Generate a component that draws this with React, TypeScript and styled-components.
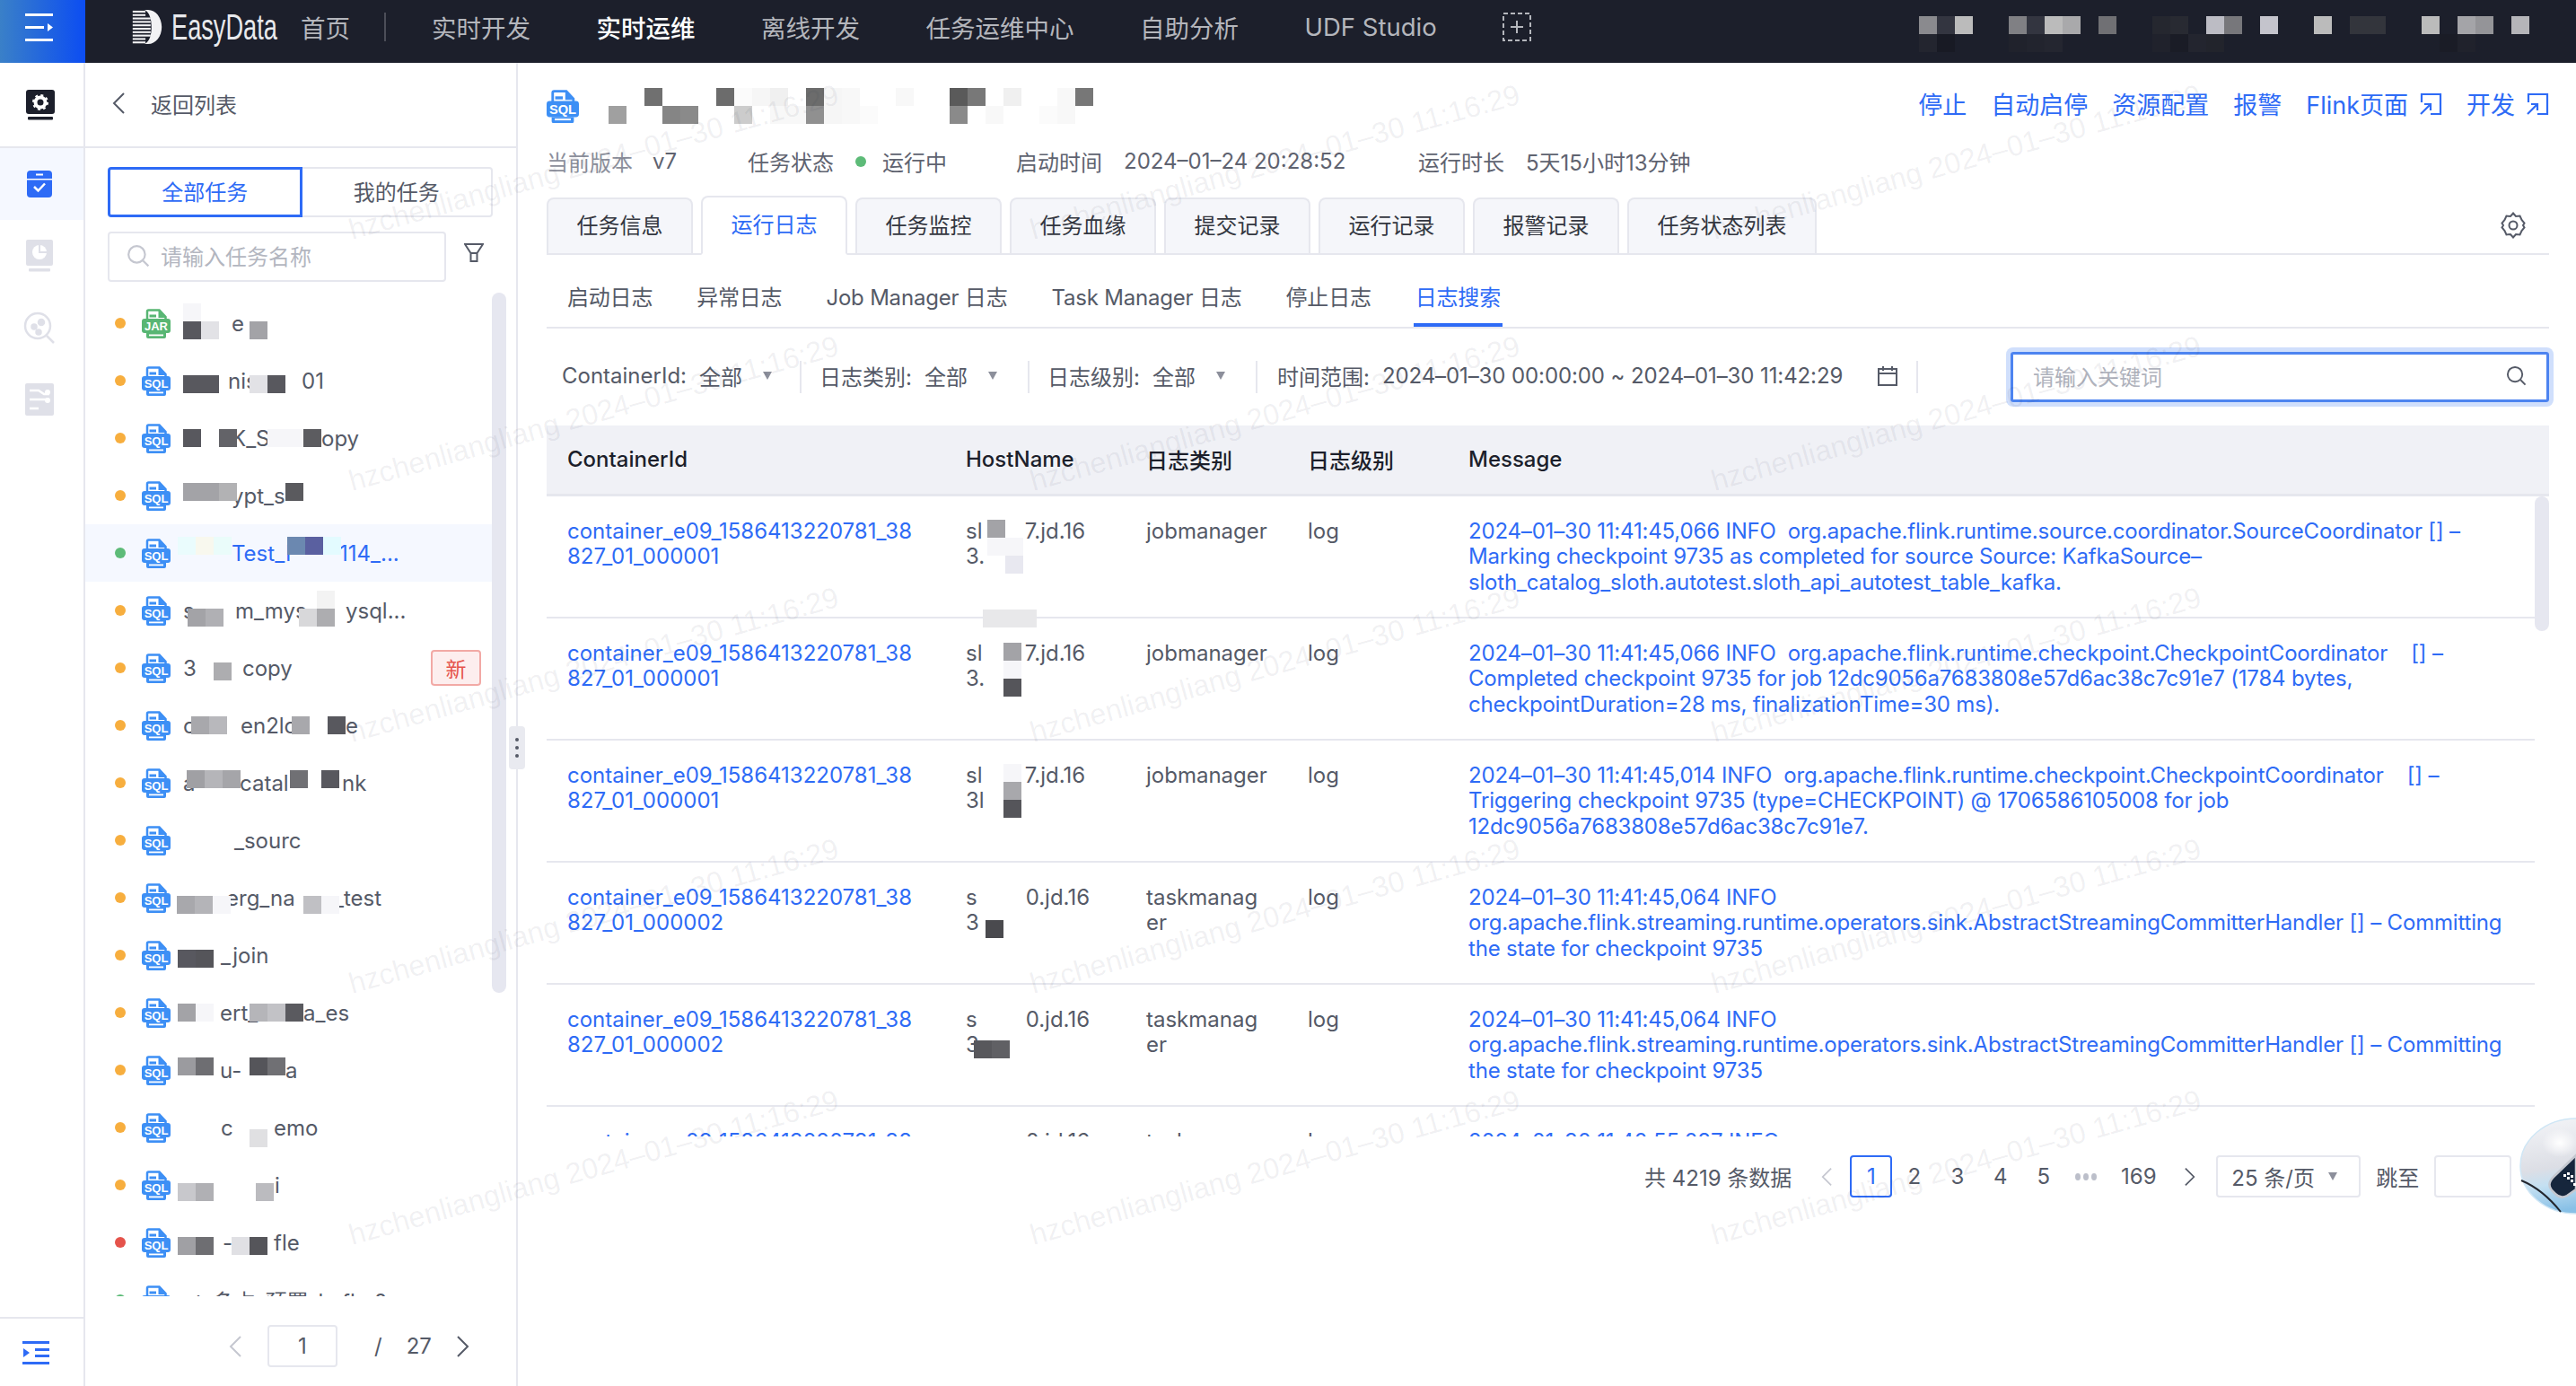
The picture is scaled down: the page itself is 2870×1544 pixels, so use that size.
import React from "react";
import styled, { createGlobalStyle } from "styled-components";

const FONT = `Inter, "Noto Sans CJK SC", "Liberation Sans", sans-serif`;
const BLUE = "#2e6bf6";
const LINE = "#e6e7ee";

const GlobalStyle = createGlobalStyle`
  html, body { margin: 0; padding: 0; background: #fff; }
  body { font-family: ${FONT}; font-size: 24px; color: #555a67; overflow: hidden; }
  * { box-sizing: border-box; }
`;

const Page = styled.div`
  position: relative;
  width: 2870px;
  height: 1544px;
  overflow: hidden;
`;

/* top bar */
const TopBar = styled.header`
  display: flex;
  align-items: center;
  height: 70px;
  padding-bottom: 10px;
  background: #1c1f2b;
`;
const MenuBlock = styled.div`
  width: 95px;
  height: 70px;
  flex: none;
  align-self: flex-start;
  display: flex;
  align-items: center;
  justify-content: center;
  padding: 0 7px 9px 0;
  background: linear-gradient(90deg, #3a80c8, #0c4df2);
`;
const LogoText = styled.span`
  display: inline-block;
  font-family: "Liberation Sans", sans-serif;
  font-size: 40px;
  color: #e8e9ec;
  margin-left: 10px;
  width: 116px;
  white-space: nowrap;
  transform: scaleX(0.68);
  transform-origin: left center;
`;
const LogoWrap = styled.div`
  display: flex;
  align-items: center;
  margin-left: 52px;
  width: 188px;
`;
const NavItem = styled.span<{ $on?: boolean }>`
  font-size: 27.5px;
  color: ${(p) => (p.$on ? "#fff" : "#b4b6bc")};
  font-weight: ${(p) => (p.$on ? 500 : 400)};
  white-space: nowrap;
`;
const NavDivider = styled.i`
  width: 2px;
  height: 32px;
  background: #4c4e58;
  margin: 0 51px 0 38px;
`;
const NavList = styled.nav`
  display: flex;
  align-items: center;
  gap: 73.5px;
`;
const TopRight = styled.div`
  margin-left: auto;
  margin-right: 52px;
  align-self: flex-start;
  padding-top: 18px;
`;

/* mosaic used for the masked bits of the screenshot */
const MosaicGrid = styled.div<{ $cols: number }>`
  display: grid;
  grid-template-columns: repeat(${(p) => p.$cols}, 20px);
  grid-auto-rows: 20px;
`;
const MosaicCell = styled.i<{ $c: string }>`
  background: ${(p) => p.$c};
`;
function Mosaic({ rows }: { rows: string[][] }) {
  return (
    <MosaicGrid $cols={rows[0].length}>
      {rows.flat().map((c, i) => (
        <MosaicCell key={i} $c={c || "transparent"} />
      ))}
    </MosaicGrid>
  );
}

/* body */
const Body = styled.div`
  display: flex;
  height: 1474px;
`;
const Rail = styled.aside`
  width: 95px;
  flex: none;
  display: flex;
  flex-direction: column;
  border-right: 2px solid ${LINE};
`;
const RailTop = styled.div`
  height: 95px;
  display: flex;
  align-items: center;
  justify-content: center;
  padding-right: 6px;
  border-bottom: 2px solid ${LINE};
  margin-right: -2px;
`;
const RailItem = styled.div<{ $on?: boolean }>`
  height: 80px;
  display: flex;
  align-items: center;
  justify-content: center;
  padding-right: 6px;
  background: ${(p) => (p.$on ? "#f5f8ff" : "transparent")};
`;
const RailFoot = styled.div`
  margin-top: auto;
  height: 77px;
  border-top: 2px solid ${LINE};
  display: flex;
  align-items: center;
  padding-left: 25px;
`;

const ListPanel = styled.aside`
  position: relative;
  width: 482px;
  flex: none;
  display: flex;
  flex-direction: column;
  border-right: 2px solid ${LINE};
`;
const BackRow = styled.div`
  height: 95px;
  flex: none;
  display: flex;
  align-items: center;
  gap: 29px;
  padding: 0 0 3px 30px;
  border-bottom: 2px solid ${LINE};
  color: #555a67;
`;
const Segment = styled.div`
  display: flex;
  margin: 21px 0 0 25px;
  width: 429px;
  height: 56px;
`;
const SegmentItem = styled.div<{ $on?: boolean }>`
  flex: 1;
  display: flex;
  align-items: center;
  justify-content: center;
  padding-bottom: 3px;
  border: ${(p) => (p.$on ? `3px solid ${BLUE}` : `2px solid ${LINE}`)};
  border-left-width: ${(p) => (p.$on ? 3 : 0)}px;
  border-radius: ${(p) => (p.$on ? "4px 0 0 4px" : "0 4px 4px 0")};
  color: ${(p) => (p.$on ? BLUE : "#555a67")};
`;
const SearchRow = styled.div`
  display: flex;
  align-items: center;
  margin: 16px 0 0 25px;
`;
const SearchBox = styled.div`
  width: 377px;
  height: 56px;
  display: flex;
  align-items: center;
  gap: 12px;
  padding: 0 0 3px 19px;
  border: 2px solid ${LINE};
  border-radius: 4px;
  color: #b3b6c0;
`;
const FilterBtn = styled.div`
  margin: -8px 0 0 20px;
  display: flex;
`;
const ListScroll = styled.div`
  flex: 1;
  display: flex;
  margin-top: 12px;
  overflow: hidden;
  min-height: 0;
`;
const Rows = styled.div`
  flex: 1;
  min-width: 0;
  height: 1118px;
  padding-top: 2px;
  overflow: hidden;
`;
const TaskRow = styled.div<{ $on?: boolean }>`
  position: relative;
  height: 64px;
  display: flex;
  align-items: center;
  padding-left: 33px;
  background: ${(p) => (p.$on ? "#f5f8ff" : "transparent")};
  color: ${(p) => (p.$on ? BLUE : "#555a67")};
`;
const Dot = styled.i<{ $c: string }>`
  width: 12px;
  height: 12px;
  flex: none;
  border-radius: 50%;
  background: ${(p) => p.$c};
`;
const TaskIcon = styled.div`
  margin-left: 18px;
  display: flex;
`;
const Frag = styled.span<{ $x: number }>`
  position: absolute;
  left: ${(p) => p.$x}px;
  top: 50%;
  white-space: pre;
  transform: translateY(-50%);
`;
const Blocks = styled.div<{ $x: number; $y: number }>`
  position: absolute;
  left: ${(p) => p.$x}px;
  top: ${(p) => p.$y}px;
`;
const NewBadge = styled.span`
  position: absolute;
  left: 385px;
  top: 12px;
  width: 56px;
  height: 40px;
  display: flex;
  align-items: center;
  justify-content: center;
  font-size: 23px;
  color: #e5534b;
  background: #fdeeee;
  border: 2px solid #f2a9a5;
  border-radius: 4px;
`;
const ScrollThumb = styled.div`
  width: 16px;
  height: 780px;
  margin: 0 11px 0 0;
  border-radius: 8px;
  background: #e6e7f0;
`;
const Pager = styled.div`
  height: 100px;
  flex: none;
  display: flex;
  align-items: flex-start;
  padding: 32px 0 0 160px;
`;
const PagerInput = styled.div`
  width: 78px;
  height: 47px;
  margin-left: 29px;
  display: flex;
  align-items: center;
  justify-content: center;
  border: 2px solid ${LINE};
  border-radius: 4px;
  color: #555a67;
`;
const PagerText = styled.span<{ $ml: number }>`
  display: flex;
  align-items: center;
  height: 47px;
  color: #555a67;
  margin-left: ${(p) => p.$ml}px;
`;
const PagerArrow = styled.span`
  display: flex;
  align-items: center;
  height: 47px;
  margin-left: 28px;
`;
const PagerArrowPrev = styled(PagerArrow)`
  margin-left: 0;
`;
const FootArrowPrev = styled(PagerArrow)`
  margin-left: 33px;
`;
const Splitter = styled.div`
  position: absolute;
  right: -10px;
  top: 739px;
  width: 18px;
  height: 48px;
  display: flex;
  flex-direction: column;
  align-items: center;
  justify-content: center;
  gap: 5px;
  background: #e9eaf0;
  border-radius: 4px;
`;
const SplitterDot = styled.i`
  width: 4px;
  height: 4px;
  border-radius: 50%;
  background: #555a67;
`;

/* main */
const Main = styled.main`
  flex: 1;
  min-width: 0;
  padding: 0 30px 0 32px;
  display: flex;
  flex-direction: column;
`;
const Head = styled.div`
  height: 90px;
  display: flex;
  align-items: flex-start;
  padding-top: 28px;
`;
const HeadIcon = styled.div`
  margin-top: 2px;
  display: flex;
`;
const TitleMask = styled.div`
  margin-left: 13px;
`;
const Actions = styled.div`
  margin-left: auto;
  margin-top: -2px;
  display: flex;
  align-items: center;
  gap: 27px;
  font-size: 27px;
  color: ${BLUE};
`;
const ActionLink = styled.span`
  display: inline-flex;
  align-items: center;
  gap: 12px;
  white-space: nowrap;
`;
const Meta = styled.div`
  display: flex;
  align-items: center;
  height: 42px;
  padding-bottom: 3px;
  white-space: nowrap;
`;
const MetaGroup = styled.div<{ $w: number }>`
  width: ${(p) => p.$w}px;
  display: flex;
  align-items: center;
  gap: 24px;
  flex: none;
`;
const MetaLabel = styled.span<{ $soft?: boolean; $ml?: number }>`
  color: ${(p) => (p.$soft ? "#8c8f9b" : "#5f6370")};
  margin-left: ${(p) => p.$ml || 0}px;
`;
const TabBar = styled.div`
  margin-top: 18px;
  height: 64px;
  display: flex;
  gap: 9px;
  align-items: flex-end;
  border-bottom: 2px solid ${LINE};
`;
const Tab = styled.div<{ $on?: boolean }>`
  padding: 0 31.5px 5px;
  display: flex;
  align-items: center;
  white-space: nowrap;
  border: 2px solid ${LINE};
  border-bottom: ${(p) => (p.$on ? "2px solid #fff" : "none")};
  margin-bottom: ${(p) => (p.$on ? "-2px" : "0")};
  height: ${(p) => (p.$on ? "66px" : "62px")};
  border-radius: 8px 8px 0 0;
  background: ${(p) => (p.$on ? "#fff" : "#f5f6fa")};
  color: ${(p) => (p.$on ? BLUE : "#33363f")};
`;
const TabGear = styled.div`
  margin-left: auto;
  align-self: center;
  margin-right: 26px;
  display: flex;
`;
const SubTabs = styled.div`
  height: 82px;
  display: flex;
  align-items: flex-start;
  gap: 49px;
  padding: 28px 0 0 23px;
  border-bottom: 2px solid ${LINE};
  white-space: nowrap;
  letter-spacing: -0.2px;
`;
const SubTab = styled.span<{ $on?: boolean }>`
  position: relative;
  height: 52px;
  color: ${(p) => (p.$on ? BLUE : "#555a67")};
  &::after {
    content: "";
    display: ${(p) => (p.$on ? "block" : "none")};
    position: absolute;
    left: -2px;
    right: -2px;
    bottom: 0;
    height: 4px;
    background: ${BLUE};
  }
`;
const Filters = styled.div`
  height: 108px;
  display: flex;
  align-items: center;
  white-space: nowrap;
`;
const FilterItem = styled.div<{ $w: number; $pl: number }>`
  width: ${(p) => p.$w}px;
  padding: 0 0 3px ${(p) => p.$pl}px;
  flex: none;
  display: flex;
  align-items: center;
  height: 36px;
  border-right: 2px solid ${LINE};
`;
const FilterValue = styled.span`
  margin-left: 14px;
`;
const Caret = styled.i`
  width: 0;
  height: 0;
  margin-left: 23px;
  border: 5.5px solid transparent;
  border-top: 9px solid #8c8f9b;
  border-bottom: 0;
`;
const TimeRange = styled.div`
  width: 736px;
  flex: none;
  padding: 0 0 3px 22px;
  display: flex;
  align-items: center;
  height: 36px;
  border-right: 2px solid ${LINE};
`;
const TimeValue = styled.span`
  margin-left: 14px;
  width: 552px;
  letter-spacing: -0.1px;
`;
const KeywordBox = styled.div`
  margin-left: auto;
  width: 600px;
  height: 56px;
  display: flex;
  align-items: center;
  justify-content: space-between;
  padding: 0 22px 3px 22px;
  border: 3px solid #4d84f0;
  border-radius: 3px;
  box-shadow: 0 0 0 5px #d0dffc;
  color: #b0b3bd;
`;
const COLS = "444px 201px 180px 179px 1fr";
const TableHead = styled.div`
  display: grid;
  grid-template-columns: ${COLS};
  height: 79px;
  align-items: center;
  padding: 0 0 1px 23px;
  background: #f0f1f6;
  border-bottom: 3px solid ${LINE};
  color: #1c1f2b;
  font-weight: 500;
`;
const TableBody = styled.div`
  position: relative;
  height: 713px;
  padding-right: 16px;
  overflow: hidden;
`;
const TableRow = styled.div`
  display: grid;
  grid-template-columns: ${COLS};
  height: 136px;
  padding: 24.5px 0 0 23px;
  border-bottom: 2px solid ${LINE};
  line-height: 28.6px;
`;
const Cell = styled.div`
  position: relative;
  white-space: pre;
`;
const LinkCell = styled(Cell)`
  color: ${BLUE};
`;
const MessageCell = styled(LinkCell)`
  letter-spacing: -0.18px;
`;
const TableThumb = styled.div`
  position: absolute;
  top: 0;
  right: 0;
  width: 16px;
  height: 150px;
  border-radius: 8px;
  background: #e6e7f0;
`;
const Foot = styled.div`
  display: flex;
  align-items: center;
  height: 47px;
  margin-top: 21px;
  padding-left: 1223px;
  white-space: nowrap;
`;
const PageBox = styled.span<{ $on?: boolean; $ml?: number }>`
  width: 47px;
  height: 47px;
  margin-left: ${(p) => p.$ml || 0}px;
  display: flex;
  align-items: center;
  justify-content: center;
  flex: none;
  border-radius: 4px;
  border: ${(p) => (p.$on ? `2px solid ${BLUE}` : "none")};
  color: ${(p) => (p.$on ? BLUE : "#555a67")};
`;
const Select = styled.div`
  width: 161px;
  height: 47px;
  margin-left: 23px;
  display: flex;
  align-items: center;
  padding-left: 15px;
  border: 2px solid ${LINE};
  border-radius: 4px;
`;
const SelectCaret = styled(Caret)`
  margin-left: 15px;
`;
const JumpInput = styled.div`
  width: 86px;
  height: 47px;
  margin-left: 17px;
  border: 2px solid ${LINE};
  border-radius: 4px;
`;
const Ellipsis = styled.span`
  width: 48px;
  display: flex;
  justify-content: center;
  gap: 3px;
  flex: none;
`;
const EllipsisDot = styled.i`
  width: 6px;
  height: 8px;
  border-radius: 50%;
  background: #bcbfca;
`;
const FootLabel = styled.span`
  margin-left: 17px;
`;
const Mascot = styled.svg`
  position: absolute;
  left: 2806px;
  top: 1245px;
`;

/* watermark sits over everything */
const Watermarks = styled.div`
  position: absolute;
  left: 393px;
  top: 0;
  display: grid;
  grid-template-columns: repeat(3, 759px);
  grid-auto-rows: 280px;
  pointer-events: none;
`;
const Mark = styled.span`
  font-size: 32.5px;
  font-family: "Liberation Sans", sans-serif;
  white-space: nowrap;
  color: rgba(40, 44, 70, 0.07);
  height: 32px;
  margin-top: 238px;
  transform: rotate(-15.6deg);
  transform-origin: left bottom;
`;

/* icons */
const DocIcon = ({ kind = "SQL", w = 32 }: { kind?: string; w?: number }) => {
  const c = kind === "JAR" ? "#58b673" : "#3d8ff5";
  return (
    <svg width={w} height={(w * 33) / 32} viewBox="0 0 32 33">
      <path d="M6 13V3a1.500 1.500 0 0 1 1.500-1.500H19.500L26.500 9v4" fill="#fff" stroke={c} strokeWidth="2.500" />
      <path d="M18.500 1.500V10h8z" fill={c} />
      <rect x="8.500" y="6.500" width="7.500" height="3" fill={c} />
      <rect x="0" y="11" width="32" height="16" rx="3" fill={c} />
      <path d="M5 27v4a2 2 0 0 0 2 2h18a2 2 0 0 0 2-2v-4z" fill={c} />
      <rect x="8" y="28.500" width="16" height="1.800" fill="#fff" />
      <text
        x="16"
        y="24"
        textAnchor="middle"
        fontSize="13"
        fontWeight="700"
        fill="#fff"
        fontFamily="Liberation Sans, sans-serif"
      >
        {kind}
      </text>
    </svg>
  );
};

const Chevron = ({ dir, c = "#555a67", w = 14, h = 24 }: { dir: "l" | "r"; c?: string; w?: number; h?: number }) => (
  <svg width={w} height={h} viewBox="0 0 14 24" fill="none" stroke={c} strokeWidth="2">
    <path d={dir === "l" ? "M13 1 2 12l11 11" : "M1 1l11 11L1 23"} />
  </svg>
);

const Jump = () => (
  <svg width="26" height="26" viewBox="0 0 26 26" fill="none" stroke={BLUE} strokeWidth="2.200">
    <path d="M3 11V2h21v22H13M2 24l10-10M6 13h7v7" />
  </svg>
);

const Magnifier = ({ c, s }: { c: string; s: number }) => (
  <svg width={s} height={s} viewBox="0 0 24 24" fill="none" stroke={c} strokeWidth="2">
    <circle cx="10.500" cy="10.500" r="8.500" />
    <path d="m17 17 5.500 5.500" />
  </svg>
);

type Piece = { x: number; y: number; rows: string[][] };
type Task = {
  dot: string;
  icon?: string;
  on?: boolean;
  isNew?: boolean;
  texts: [number, string][];
  pieces: Piece[];
};

const ORANGE = "#f7ae3e";
const GREEN = "#5dbb78";
const RED = "#e5534b";
const D = "#58585e";
const M = "#a3a3a7";
const L = "#e2e2e6";
const F = "#f6f6f9";

// x is measured from the panel's left edge, y from the row's top
const tasks: Task[] = [
  {
    dot: ORANGE,
    icon: "JAR",
    texts: [[163, "e"]],
    pieces: [
      { x: 109, y: 10, rows: [[F, ""]] },
      { x: 109, y: 30, rows: [[D, L]] },
      { x: 183, y: 30, rows: [[M]] },
    ],
  },
  {
    dot: ORANGE,
    texts: [[159, "nis"], [241, "01"]],
    pieces: [
      { x: 109, y: 26, rows: [[D, D]] },
      { x: 183, y: 26, rows: [[L, D]] },
    ],
  },
  {
    dot: ORANGE,
    texts: [[163, "K_S"], [263, "opy"]],
    pieces: [
      { x: 109, y: 22, rows: [[D, "", "#636368"]] },
      { x: 203, y: 22, rows: [[F, F, "#5c5c60"]] },
    ],
  },
  {
    dot: ORANGE,
    texts: [[163, "ypt_s"]],
    pieces: [
      { x: 109, y: 18, rows: [[M, M, "#b2b2b4"]] },
      { x: 223, y: 18, rows: [["#5a5a5e"]] },
    ],
  },
  {
    dot: GREEN,
    on: true,
    texts: [[163, "Test_F"], [283, "114_..."]],
    pieces: [
      { x: 103, y: 14, rows: [["#eafcfd", "#f8f8ee", "#eafcfa"]] },
      { x: 225, y: 14, rows: [["#6b88b0", "#5a60a0", "#e3fbff"]] },
    ],
  },
  {
    dot: ORANGE,
    texts: [[109, "s"], [167, "m_mys"], [290, "ysql..."]],
    pieces: [
      { x: 114, y: 30, rows: [["#a3a3a7", "#b0b0b4"]] },
      { x: 238, y: 30, rows: [["#d8d8da", "#adadb0"]] },
      { x: 258, y: 10, rows: [["#f3f3f3"]] },
    ],
  },
  {
    dot: ORANGE,
    isNew: true,
    texts: [[109, "3"], [175, "copy"]],
    pieces: [{ x: 143, y: 26, rows: [["#adadb0"]] }],
  },
  {
    dot: ORANGE,
    texts: [[109, "c"], [173, "en2lo"], [290, "e"]],
    pieces: [
      { x: 118, y: 22, rows: [["#a8a8ac", "#b8b8bc"]] },
      { x: 230, y: 22, rows: [["#a8a8ac"]] },
      { x: 270, y: 22, rows: [[D]] },
    ],
  },
  {
    dot: ORANGE,
    texts: [[109, "a"], [172, "catal"], [286, "nk"]],
    pieces: [
      { x: 113, y: 18, rows: [["#a0a0a4", "#b5b5b9", "#a5a5a9"]] },
      { x: 228, y: 18, rows: [["#707074"]] },
      { x: 263, y: 18, rows: [[D]] },
    ],
  },
  {
    dot: ORANGE,
    texts: [[166, "_sourc"]],
    pieces: [],
  },
  {
    dot: ORANGE,
    texts: [[157, "erg_na"], [277, "_test"]],
    pieces: [
      { x: 102, y: 30, rows: [["#a8a8ac", "#b4b4b8", F]] },
      { x: 243, y: 30, rows: [["#c0c0c4", F]] },
    ],
  },
  {
    dot: ORANGE,
    texts: [[151, "_join"]],
    pieces: [{ x: 103, y: 26, rows: [["#58585f", "#55555a"]] }],
  },
  {
    dot: ORANGE,
    texts: [[150, "ert_"], [243, "a_es"]],
    pieces: [
      { x: 103, y: 22, rows: [["#a3a3a7", F]] },
      { x: 183, y: 22, rows: [["#b5b5b9", "#c2c2c6", "#5a5a5f"]] },
    ],
  },
  {
    dot: ORANGE,
    texts: [[150, "u-"], [223, "a"]],
    pieces: [
      { x: 103, y: 18, rows: [["#9b9b9f", "#6e6e72"]] },
      { x: 183, y: 18, rows: [["#55555a", "#707074"]] },
    ],
  },
  {
    dot: ORANGE,
    texts: [[151, "c"], [210, "emo"]],
    pieces: [{ x: 183, y: 34, rows: [["#e0e0e2"]] }],
  },
  {
    dot: ORANGE,
    texts: [[211, "i"]],
    pieces: [
      { x: 103, y: 30, rows: [["#c8c8cc", "#b0b0b4"]] },
      { x: 190, y: 30, rows: [["#bbbbbf"]] },
    ],
  },
  {
    dot: RED,
    texts: [[153, "-"], [210, "fle"]],
    pieces: [
      { x: 103, y: 26, rows: [["#a0a0a4", "#6e6e72"]] },
      { x: 163, y: 26, rows: [["#e0e0e4", "#55555a"]] },
    ],
  },
  {
    dot: GREEN,
    texts: [[109, "ct_多占_预置_kafka0"]],
    pieces: [],
  },
];

const logRows = [
  {
    id: "container_e09_1586413220781_38\n827_01_000001",
    host: "sl       7.jd.16\n3.",
    type: "jobmanager",
    masks: [
      { x: 24, y: 1, rows: [[M, ""], [F, F], ["", "#e8e8f0"]] },
      { x: 19, y: 101, rows: [["#e8e8ea", "#e8e8ea", "#e8e8ea"]] },
    ],
    msg: "2024–01–30 11:41:45,066 INFO  org.apache.flink.runtime.source.coordinator.SourceCoordinator [] –\nMarking checkpoint 9735 as completed for source Source: KafkaSource–\nsloth_catalog_sloth.autotest.sloth_api_autotest_table_kafka.",
  },
  {
    id: "container_e09_1586413220781_38\n827_01_000001",
    host: "sl       7.jd.16\n3.",
    type: "jobmanager",
    masks: [{ x: 42, y: 2, rows: [[M], [F], ["#55555a"]] }],
    msg: "2024–01–30 11:41:45,066 INFO  org.apache.flink.runtime.checkpoint.CheckpointCoordinator    [] –\nCompleted checkpoint 9735 for job 12dc9056a7683808e57d6ac38c7c91e7 (1784 bytes,\ncheckpointDuration=28 ms, finalizationTime=30 ms).",
  },
  {
    id: "container_e09_1586413220781_38\n827_01_000001",
    host: "sl       7.jd.16\n3l",
    type: "jobmanager",
    masks: [{ x: 22, y: 1, rows: [["", F], ["", "#a8a8ac"], ["", "#55555a"]] }],
    msg: "2024–01–30 11:41:45,014 INFO  org.apache.flink.runtime.checkpoint.CheckpointCoordinator    [] –\nTriggering checkpoint 9735 (type=CHECKPOINT) @ 1706586105008 for job\n12dc9056a7683808e57d6ac38c7c91e7.",
  },
  {
    id: "container_e09_1586413220781_38\n827_01_000002",
    host: "s        0.jd.16\n3",
    type: "taskmanag\ner",
    masks: [{ x: 22, y: 39, rows: [["#4a4a4e"]] }],
    msg: "2024–01–30 11:41:45,064 INFO\norg.apache.flink.streaming.runtime.operators.sink.AbstractStreamingCommitterHandler [] – Committing\nthe state for checkpoint 9735",
  },
  {
    id: "container_e09_1586413220781_38\n827_01_000002",
    host: "s        0.jd.16\n3",
    type: "taskmanag\ner",
    masks: [{ x: 9, y: 37, rows: [["#58585c", "#606064"]] }],
    msg: "2024–01–30 11:41:45,064 INFO\norg.apache.flink.streaming.runtime.operators.sink.AbstractStreamingCommitterHandler [] – Committing\nthe state for checkpoint 9735",
  },
  {
    id: "container_e09_1586413220781_38\n827_01_000002",
    host: "s        0.jd.16",
    type: "taskmanag\ner",
    masks: [],
    msg: "2024–01–30 11:40:55,087 INFO",
  },
];

const topMask: string[][] = [
  ["#8a8a8e","#333540","#bbbbbb","","","#808084","#333540","#bbbbbb","#a9a9ab","","#707074","","","#25272f","#282a32","","#bcbcc4","#77777b","","#c4c4cc","","","#bbbbbb","","#33353c","#33353c","","","#bbbbbb","","#a4a4a8","#949498","","#b5b5b9"],
  ["#23252f","#181a24","","","","#20222c","#22242e","#242630","","","","","","#20222c","#1a1c26","#23252f","#22242c","","","","","","","","","","","","","#1a1c26","#20222c","","",""],
];

const titleMask: string[][] = [
  ["","","","#707070","","","","#6c6c6c","#fbfbfb","#f6f6f6","#f0f0f0","","#6c6c6c","#f6f6f6","#f8f8f8","","","#f8f8f8","","","#5a5a5a","#787878","","#f0f0f0","","","#f8f8f8","#777777"],
  ["","#a0a0a0","","","#858585","#8a8a8a","","","#cccccc","","#f8f8f8","#f8f8f8","#909090","#f6f6f6","#f8f8f8","#fbfbfb","","","","","#8a8a8a","","#f8f8f8","","","#fbfbfb","#f8f8f8",""],
];

export default function App() {
  return (
    <Page>
      <GlobalStyle />
      <TopBar>
        <MenuBlock>
          <svg width="32" height="31" viewBox="0 0 32 31" fill="#fff">
            <rect x="0" y="0" width="31" height="3" />
            <rect x="0" y="14" width="21" height="3" />
            <path d="M25 11l6 4.500-6 4.500z" />
            <rect x="0" y="28" width="31" height="3" />
          </svg>
        </MenuBlock>
        <LogoWrap>
          <svg width="34" height="40" viewBox="0 0 34 42" fill="#f2f2f4">
            <path d="M14 1h4c9 0 16 9 16 20s-7 20-16 20h-4c6-3 8-11 8-20s-2-17-8-20z" />
            {[2, 6, 10, 14, 18, 22, 26, 30, 34, 38].map((y) => (
              <rect key={y} x={0} y={y} width={y > 8 && y < 34 ? 21 : 15} height="2.200" />
            ))}
          </svg>
          <LogoText>EasyData</LogoText>
        </LogoWrap>
        <NavItem>首页</NavItem>
        <NavDivider />
        <NavList>
          <NavItem>实时开发</NavItem>
          <NavItem $on>实时运维</NavItem>
          <NavItem>离线开发</NavItem>
          <NavItem>任务运维中心</NavItem>
          <NavItem>自助分析</NavItem>
          <NavItem>UDF Studio</NavItem>
          <svg width="32" height="32" viewBox="0 0 32 32" fill="none" stroke="#b4b6bc" strokeWidth="2">
            <path d="M1 1h30v30H1z" strokeDasharray="5 3" />
            <path d="M16 9v14M9 16h14" />
          </svg>
        </NavList>
        <TopRight>
          <Mosaic rows={topMask} />
        </TopRight>
      </TopBar>

      <Body>
        <Rail>
          <RailTop>
            <svg width="32" height="34" viewBox="0 0 32 34">
              <rect x="0" y="0" width="32" height="27" rx="3" fill="#1c1f2b" />
              <rect x="2" y="30" width="28" height="3.500" rx="1" fill="#1c1f2b" />
              <circle cx="16" cy="14" r="5.500" fill="none" stroke="#fff" strokeWidth="4" />
              <circle cx="16" cy="14" r="8" fill="none" stroke="#fff" strokeWidth="2" strokeDasharray="3 3.300" />
            </svg>
          </RailTop>
          <RailItem $on>
            <svg width="28" height="30" viewBox="0 0 28 30">
              <rect x="0" y="0" width="28" height="30" rx="4" fill={BLUE} />
              <rect x="0" y="9" width="28" height="1.500" fill="#fff" />
              <rect x="10" y="3.500" width="8" height="2" fill="#fff" />
              <path d="M8 18l4.500 4.500L20 14.500" fill="none" stroke="#fff" strokeWidth="2.500" />
            </svg>
          </RailItem>
          <RailItem>
            <svg width="30" height="36" viewBox="0 0 30 36">
              <rect x="0" y="0" width="30" height="29" rx="2" fill="#dfe0e8" />
              <rect x="3" y="32" width="24" height="3.500" rx="1" fill="#dfe0e8" />
              <circle cx="15" cy="14" r="8" fill="#fff" />
              <path d="M15 6v8h8" fill="none" stroke="#dfe0e8" strokeWidth="2" />
            </svg>
          </RailItem>
          <RailItem>
            <svg width="36" height="36" viewBox="0 0 36 36" fill="none" stroke="#dfe0e8" strokeWidth="2.500">
              <circle cx="16" cy="16" r="14" />
              <path d="M26 27l8 8" />
              <circle cx="20" cy="12" r="3" fill="#dfe0e8" />
              <circle cx="12" cy="17" r="2.500" fill="#dfe0e8" />
              <circle cx="17" cy="23" r="2.500" fill="#dfe0e8" />
            </svg>
          </RailItem>
          <RailItem>
            <svg width="32" height="36" viewBox="0 0 32 36">
              <rect width="32" height="36" rx="2" fill="#dfe0e8" />
              <path d="M5 8h10l6 4h6M5 18h22M5 28h10" stroke="#fff" strokeWidth="2.500" fill="none" />
              <circle cx="25" cy="10" r="3" fill="#fff" />
              <circle cx="25" cy="19" r="3" fill="#fff" />
            </svg>
          </RailItem>
          <RailFoot>
            <svg width="30" height="26" viewBox="0 0 30 26" fill={BLUE}>
              <rect x="0" y="0" width="30" height="3" />
              <rect x="14" y="8" width="16" height="3" />
              <path d="M1 8l7 5-7 5z" />
              <rect x="14" y="15" width="16" height="3" />
              <rect x="0" y="23" width="30" height="3" />
            </svg>
          </RailFoot>
        </Rail>

        <ListPanel>
          <BackRow>
            <Chevron dir="l" />
            <span>返回列表</span>
          </BackRow>
          <Segment>
            <SegmentItem $on>全部任务</SegmentItem>
            <SegmentItem>我的任务</SegmentItem>
          </Segment>
          <SearchRow>
            <SearchBox>
              <Magnifier c="#c5c7d0" s={26} />
              <span>请输入任务名称</span>
            </SearchBox>
            <FilterBtn>
              <svg width="22" height="22" viewBox="0 0 22 22" fill="none" stroke="#555a67" strokeWidth="2">
                <path d="M1 1h20l-6.500 10H7.500zM7.500 11v9h7v-9" />
              </svg>
            </FilterBtn>
          </SearchRow>
          <ListScroll>
            <Rows>
              {tasks.map((t, i) => (
                <TaskRow key={i} $on={t.on}>
                  <Dot $c={t.dot} />
                  <TaskIcon>
                    <DocIcon kind={t.icon || "SQL"} />
                  </TaskIcon>
                  {t.texts.map(([x, s], j) => (
                    <Frag key={j} $x={x}>
                      {s}
                    </Frag>
                  ))}
                  {t.pieces.map((p, j) => (
                    <Blocks key={j} $x={p.x} $y={p.y}>
                      <Mosaic rows={p.rows} />
                    </Blocks>
                  ))}
                  {t.isNew && <NewBadge>新</NewBadge>}
                </TaskRow>
              ))}
            </Rows>
            <ScrollThumb />
          </ListScroll>
          <Pager>
            <PagerArrowPrev>
              <Chevron dir="l" c="#c5c7d0" />
            </PagerArrowPrev>
            <PagerInput>1</PagerInput>
            <PagerText $ml={41}>/</PagerText>
            <PagerText $ml={27}>27</PagerText>
            <PagerArrow>
              <Chevron dir="r" />
            </PagerArrow>
          </Pager>
          <Splitter>
            <SplitterDot />
            <SplitterDot />
            <SplitterDot />
          </Splitter>
        </ListPanel>

        <Main>
          <Head>
            <HeadIcon>
              <DocIcon w={36} />
            </HeadIcon>
            <TitleMask>
              <Mosaic rows={titleMask} />
            </TitleMask>
            <Actions>
              <ActionLink>停止</ActionLink>
              <ActionLink>自动启停</ActionLink>
              <ActionLink>资源配置</ActionLink>
              <ActionLink>报警</ActionLink>
              <ActionLink>
                Flink页面
                <Jump />
              </ActionLink>
              <ActionLink>
                开发
                <Jump />
              </ActionLink>
            </Actions>
          </Head>
          <Meta>
            <MetaGroup $w={224}>
              <MetaLabel $soft>当前版本</MetaLabel>
              <MetaLabel $ml={-2}>v7</MetaLabel>
            </MetaGroup>
            <MetaGroup $w={299}>
              <MetaLabel>任务状态</MetaLabel>
              <Dot $c={GREEN} />
              <MetaLabel $ml={-6}>运行中</MetaLabel>
            </MetaGroup>
            <MetaGroup $w={448}>
              <MetaLabel>启动时间</MetaLabel>
              <MetaLabel>2024–01–24 20:28:52</MetaLabel>
            </MetaGroup>
            <MetaGroup $w={400}>
              <MetaLabel>运行时长</MetaLabel>
              <MetaLabel>5天15小时13分钟</MetaLabel>
            </MetaGroup>
          </Meta>
          <TabBar>
            <Tab>任务信息</Tab>
            <Tab $on>运行日志</Tab>
            <Tab>任务监控</Tab>
            <Tab>任务血缘</Tab>
            <Tab>提交记录</Tab>
            <Tab>运行记录</Tab>
            <Tab>报警记录</Tab>
            <Tab>任务状态列表</Tab>
            <TabGear>
              <svg width="28" height="30" viewBox="0 0 28 30" fill="none" stroke="#555a67" strokeWidth="2">
                <path d="M14 1.500l3 3.500 4.500-.500 2 4.500 3 3.500-1.500 2.500 1.500 2.500-3 3.500-2 4.500-4.500-.500-3 3.500-3-3.500-4.500.500-2-4.500-3-3.500L3 15l-1.500-2.500 3-3.500 2-4.500 4.500.500z" />
                <circle cx="14" cy="15" r="4.500" />
              </svg>
            </TabGear>
          </TabBar>
          <SubTabs>
            <SubTab>启动日志</SubTab>
            <SubTab>异常日志</SubTab>
            <SubTab>Job Manager 日志</SubTab>
            <SubTab>Task Manager 日志</SubTab>
            <SubTab>停止日志</SubTab>
            <SubTab $on>日志搜索</SubTab>
          </SubTabs>
          <Filters>
            <FilterItem $w={284} $pl={17}>
              ContainerId:
              <FilterValue>全部</FilterValue>
              <Caret />
            </FilterItem>
            <FilterItem $w={254} $pl={20}>
              日志类别:
              <FilterValue>全部</FilterValue>
              <Caret />
            </FilterItem>
            <FilterItem $w={254} $pl={20}>
              日志级别:
              <FilterValue>全部</FilterValue>
              <Caret />
            </FilterItem>
            <TimeRange>
              时间范围:
              <TimeValue>2024–01–30 00:00:00 ~ 2024–01–30 11:42:29</TimeValue>
              <svg width="22" height="22" viewBox="0 0 22 22" fill="none" stroke="#555a67" strokeWidth="2">
                <path d="M1 3h20v18H1zM1 8h20M6 0v5M16 0v5" />
              </svg>
            </TimeRange>
            <KeywordBox>
              <span>请输入关键词</span>
              <Magnifier c="#555a67" s={23} />
            </KeywordBox>
          </Filters>
          <TableHead>
            <span>ContainerId</span>
            <span>HostName</span>
            <span>日志类别</span>
            <span>日志级别</span>
            <span>Message</span>
          </TableHead>
          <TableBody>
            {logRows.map((r, i) => (
              <TableRow key={i}>
                <LinkCell>{r.id}</LinkCell>
                <Cell>
                  {r.host}
                  {r.masks.map((m, j) => (
                    <Blocks key={j} $x={m.x} $y={m.y}>
                      <Mosaic rows={m.rows} />
                    </Blocks>
                  ))}
                </Cell>
                <Cell>{r.type}</Cell>
                <Cell>log</Cell>
                <MessageCell>{r.msg}</MessageCell>
              </TableRow>
            ))}
            <TableThumb />
          </TableBody>
          <Foot>
            <span>共 4219 条数据</span>
            <FootArrowPrev>
              <Chevron dir="l" c="#c5c7d0" w={12} h={22} />
            </FootArrowPrev>
            <PageBox $on $ml={20}>
              1
            </PageBox>
            <PageBox $ml={1}>2</PageBox>
            <PageBox $ml={1}>3</PageBox>
            <PageBox $ml={1}>4</PageBox>
            <PageBox $ml={1}>5</PageBox>
            <Ellipsis>
              <EllipsisDot />
              <EllipsisDot />
              <EllipsisDot />
            </Ellipsis>
            <PageBox $ml={11}>169</PageBox>
            <PagerArrow>
              <Chevron dir="r" w={12} h={22} />
            </PagerArrow>
            <Select>
              25 条/页
              <SelectCaret />
            </Select>
            <FootLabel>跳至</FootLabel>
            <JumpInput />
          </Foot>
        </Main>
      </Body>

      <Mascot width="64" height="112" viewBox="0 0 64 112">
        <defs>
          <linearGradient id="ball" x1="0" y1="0" x2="0.2" y2="1">
            <stop offset="0" stopColor="#f4f5f8" />
            <stop offset="0.55" stopColor="#dcdee5" />
            <stop offset="0.72" stopColor="#c4e0f2" />
            <stop offset="1" stopColor="#88c0e6" />
          </linearGradient>
          <radialGradient id="shine" cx="0.5" cy="0.5" r="0.5">
            <stop offset="0" stopColor="#ffffff" />
            <stop offset="1" stopColor="#ffffff" stopOpacity="0" />
          </radialGradient>
        </defs>
        <ellipse cx="64" cy="54" rx="62" ry="53" fill="url(#ball)" stroke="#cfe6f5" strokeWidth="1.500" />
        <ellipse cx="46" cy="28" rx="20" ry="16" fill="url(#shine)" />
        <path d="M64 42 39 66q-8 8-2 15l4 4q6 6 13 2l10-7z" fill="#16263c" stroke="#c4c8d0" strokeWidth="2.500" />
        <g fill="#fff">
          <rect x="50" y="63" width="3" height="3" />
          <rect x="54" y="61" width="3" height="3" />
          <rect x="54" y="66" width="3" height="3" />
          <rect x="58" y="64" width="3" height="3" />
          <rect x="58" y="69" width="3" height="3" />
          <rect x="61" y="73" width="3" height="3" />
        </g>
        <path d="M3 70q24 10 44 35" stroke="#23262e" strokeWidth="2" fill="none" />
      </Mascot>

      <Watermarks>
        {Array.from({ length: 15 }, (_, i) => (
          <Mark key={i}>hzchenliangliang 2024–01–30 11:16:29</Mark>
        ))}
      </Watermarks>
    </Page>
  );
}
